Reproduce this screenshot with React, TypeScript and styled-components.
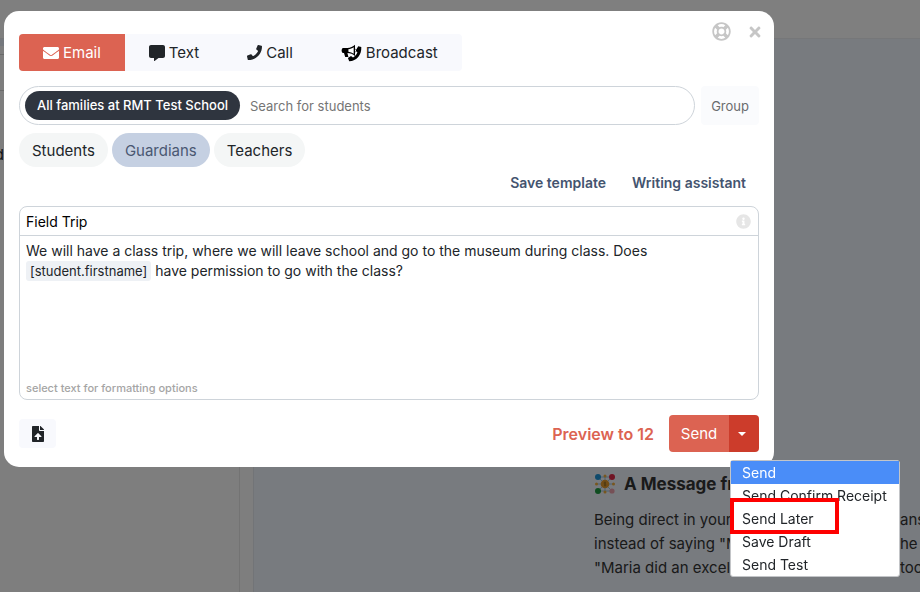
import React from "react";
import styled, { createGlobalStyle } from "styled-components";
import {
  FaCommentAlt,
  FaEnvelope,
  FaFileUpload,
  FaInfoCircle,
  FaPhone,
  FaRegLifeRing,
  FaTimes,
} from "react-icons/fa";

const GlobalStyle = createGlobalStyle`
  *, *::before, *::after { box-sizing: border-box; }
  html, body, #root { height: 100%; }
  body {
    margin: 0;
    overflow: hidden;
    background: #fff;
    color: #212529;
    font-family: Inter, "Liberation Sans", sans-serif;
    font-size: 15px;
  }
  button, input { font: inherit; color: inherit; }
  button { cursor: pointer; }
`;

const Page = styled.div`
  display: flex;
  flex-direction: column;
  height: 100%;
  overflow: hidden;
`;

const TopBar = styled.header`
  flex: none;
  height: 39px;
  border-bottom: 1px solid #eceff3;
`;

const Columns = styled.div`
  flex: 1;
  display: flex;
  min-height: 0;
`;

const Sidebar = styled.aside`
  flex: none;
  width: 240px;
  background: #fcfcfc;
  border-right: 1px solid #e6e6e6;
`;

const SidebarBand = styled.div<{ $height: number; $tint?: boolean }>`
  height: ${(p) => p.$height}px;
  background: ${(p) => (p.$tint ? "#eaf0fb" : "transparent")};
  border-bottom: ${(p) => (p.$tint ? "none" : "1px solid #d5d5d5")};
`;

const SidebarText = styled.p`
  margin: 52px 0 0;
  width: 4px;
  display: flex;
  justify-content: flex-end;
  line-height: 24px;
`;

const Gutter = styled.div`
  flex: none;
  width: 14px;
  background: #fcfcfc;
  border-right: 1px solid #e4e8ee;
`;

const Feed = styled.main`
  flex: 1;
  min-width: 0;
  display: flex;
  flex-direction: column;
  justify-content: flex-end;
  padding: 0 0 12px 340px;
  background: #f0f6ff;
  color: #343434;
`;

const PostTitle = styled.h2`
  display: flex;
  align-items: center;
  gap: 8px;
  margin: 0 0 12px;
  font-size: 17px;
  line-height: 24px;
  font-weight: 700;
  white-space: nowrap;
`;

const PostLine = styled.p`
  display: grid;
  grid-template-columns: 1fr 20px;
  margin: 0;
  line-height: 24px;
  white-space: nowrap;
`;

const Overlay = styled.div`
  position: fixed;
  inset: 0;
  padding: 11px 146px 0 4px;
  background: rgba(0, 0, 0, 0.5);
`;

const Dialog = styled.section`
  padding: 11px 15px 15px;
  background: #fff;
  border-radius: 15px;
`;

const DialogHead = styled.div`
  display: flex;
  align-items: flex-start;
  justify-content: space-between;
`;

const Tabs = styled.div`
  display: flex;
  margin-top: 12px;
  border-radius: 4px;
  overflow: hidden;
  background: #f8f9fd;
`;

const Tab = styled.button<{ $active?: boolean }>`
  display: flex;
  align-items: center;
  gap: 4px;
  height: 37px;
  padding: 0 24px;
  border: 0;
  background: ${(p) => (p.$active ? "#dc6352" : "transparent")};
  color: ${(p) => (p.$active ? "#fff" : "#212529")};
`;

const HeadActions = styled.div`
  display: flex;
  align-items: center;
  gap: 16px;
  margin-right: -4px;
`;

const IconButton = styled.button`
  display: flex;
  padding: 0;
  border: 0;
  background: none;
  color: #c6c6c6;
`;

const Recipients = styled.div`
  display: flex;
  gap: 6px;
  margin-top: 15px;
`;

const SearchField = styled.label`
  flex: 1;
  display: flex;
  align-items: center;
  gap: 10px;
  height: 39px;
  padding: 0 5px;
  border: 1px solid #ced4da;
  border-radius: 20px;
`;

const RecipientChip = styled.span`
  padding: 0 12px;
  border-radius: 15px;
  background: #2f353f;
  color: #fff;
  font-size: 13px;
  font-weight: 500;
  line-height: 29px;
  white-space: nowrap;
`;

const SearchInput = styled.input`
  flex: 1;
  min-width: 0;
  padding: 0;
  border: 0;
  outline: 0;
  background: none;
  font-size: 13px;
  &::placeholder { color: #757575; opacity: 1; }
`;

const GroupButton = styled.button`
  padding: 0 10px;
  border: 0;
  border-radius: 4px;
  background: #fafbfd;
  color: #6a6c6f;
  font-size: 13px;
`;

const Filters = styled.div`
  display: flex;
  gap: 4px;
  margin-top: 8px;
`;

const Filter = styled.button<{ $active?: boolean }>`
  height: 34px;
  padding: 0 13px;
  border: 0;
  border-radius: 17px;
  background: ${(p) => (p.$active ? "#c5d0e2" : "#f4f6f6")};
  color: ${(p) => (p.$active ? "#4a5872" : "#212529")};
`;

const Assist = styled.div`
  display: flex;
  justify-content: flex-end;
  gap: 26px;
  margin-top: 6px;
  padding-right: 13px;
`;

const AssistLink = styled.a`
  color: #44546f;
  font-size: 14px;
  font-weight: 600;
  line-height: 20px;
  text-decoration: none;
`;

const Editor = styled.div`
  margin-top: 13px;
  border: 1px solid #ced4da;
  border-radius: 8px;
`;

const Subject = styled.div`
  display: flex;
  align-items: center;
  height: 29px;
  padding: 0 7px 0 6px;
  border-bottom: 1px solid #ced4da;
  color: #e6e6e6;
`;

const SubjectInput = styled.input`
  flex: 1;
  padding: 0;
  border: 0;
  outline: 0;
  background: none;
  color: #000;
  font-size: 14px;
`;

const Message = styled.div`
  min-height: 144px;
  padding: 5px 6px 0;
  outline: 0;
  font-size: 14px;
  line-height: 20px;
`;

const Field = styled.span`
  padding: 2px 4px;
  border-radius: 3px;
  background: #eef1f5;
  font-size: 13px;
`;

const Hint = styled.p`
  margin: 0;
  padding: 0 6px 3px;
  color: #a5a5a5;
  font-size: 11px;
  font-weight: 500;
  line-height: 16px;
`;

const Footer = styled.footer`
  display: flex;
  align-items: center;
  margin-top: 15px;
`;

const UploadButton = styled.button`
  display: flex;
  align-items: center;
  justify-content: center;
  width: 37px;
  height: 29px;
  margin-right: auto;
  padding: 0;
  border: 0;
  border-radius: 4px;
  background: #f8f9fd;
`;

const PreviewButton = styled.button`
  padding: 0;
  margin-right: 15px;
  border: 0;
  background: none;
  color: #dc6352;
  font-size: 16px;
  font-weight: 600;
`;

const SplitButton = styled.div`
  position: relative;
  display: flex;
  height: 37px;
`;

const SendButton = styled.button`
  width: 60px;
  padding: 0;
  border: 0;
  border-radius: 4px 0 0 4px;
  background: #dc6352;
  color: #fff;
`;

const CaretButton = styled.button`
  display: flex;
  align-items: center;
  justify-content: center;
  width: 30px;
  padding: 0 4px 0 0;
  border: 0;
  border-radius: 0 4px 4px 0;
  background: #cc3c2b;
`;

const Caret = styled.span`
  border: 4px solid transparent;
  border-top-color: #fff;
  border-bottom: 0;
`;

const Menu = styled.div`
  position: absolute;
  top: 45px;
  left: 61px;
  width: 170px;
  border: 1px solid #c3c5c8;
  border-radius: 3px;
  background: #fff;
`;

const MenuItem = styled.button<{ $active?: boolean }>`
  position: relative;
  display: block;
  width: 100%;
  height: 23px;
  padding: 0 11px;
  border: 0;
  background: ${(p) => (p.$active ? "#4a8df8" : "transparent")};
  color: ${(p) => (p.$active ? "#fff" : "#212529")};
  font-size: 14px;
  text-align: left;
`;

const Marker = styled.span`
  position: absolute;
  top: -9px;
  left: -1px;
  width: 109px;
  height: 36px;
  border: 4px solid #fe0000;
`;

function BroadcastIcon() {
  return (
    <svg width="21" height="18" viewBox="0 0 21 18" aria-hidden="true">
      <path d="M17.2 2.2 20.3 3C20.8 10.6 15.8 17 8.2 17.3L6.9 14.1 10 12 12 13.4C14 12.3 15.6 10.5 16.4 8.2L14.8 6.4Z" fill="#000" />
      <path d="M2 4H6.4C9.3 4 12 2.8 14 .8V12.1C12 10.1 9.3 9 6.4 9L7.4 13H4.2L3 9H2C.2 8.6.2 4.4 2 4Z" fill="#000" />
      <path d="M7.4 5.3C9.4 5 11.2 4.2 12.7 3.2V9.8C11.2 8.7 9.4 8 7.4 7.7Z" fill="#fff" />
      <path d="M14.5 5.3C16 5.5 16 7.6 14.5 7.8" fill="none" stroke="#000" strokeWidth="1" />
    </svg>
  );
}

function NetworkIcon() {
  return (
    <svg width="22" height="22" viewBox="0 0 22 22" aria-hidden="true">
      <path d="M4 4 18 18M18 4 4 18M11 2V20M2 11H20M4 4H18M4 18H18" stroke="#9cc4dc" strokeWidth="1" />
      <circle cx="4" cy="4" r="3" fill="#1d94d8" />
      <circle cx="18" cy="4" r="3" fill="#e02848" />
      <circle cx="4" cy="18" r="3" fill="#1f9a40" />
      <circle cx="18" cy="18" r="2.6" fill="#eda0ac" />
      <circle cx="11" cy="11" r="4.3" fill="#e49b2d" />
      <path d="M11 8.5V13.5M9.7 10H12M10 12H12.3" stroke="#987127" strokeWidth="1" />
      <g fill="#f0ae3c">
        <circle cx="11" cy="3" r="1.5" />
        <circle cx="2.5" cy="11" r="1.5" />
        <circle cx="19.5" cy="11" r="1.5" />
        <circle cx="11" cy="19" r="1.5" />
      </g>
    </svg>
  );
}

const menuItems = ["Send", "Send Confirm Receipt", "Send Later", "Save Draft", "Send Test"];

const postLines = [
  ["Being direct in your", "ans"],
  ["instead of saying \"M", "he"],
  ["\"Maria did an excel", "too"],
];

export default function App() {
  return (
    <>
      <GlobalStyle />
      <Page>
        <TopBar />
        <Columns>
          <Sidebar>
            <SidebarBand $height={7} $tint />
            <SidebarBand $height={9} />
            <SidebarBand $height={36} />
            <SidebarText>d</SidebarText>
          </Sidebar>
          <Gutter />
          <Feed>
            <PostTitle>
              <NetworkIcon />
              A Message fr
            </PostTitle>
            {postLines.map(([start, end]) => (
              <PostLine key={end}>
                <span>{start}</span>
                <span>{end}</span>
              </PostLine>
            ))}
          </Feed>
        </Columns>
      </Page>
      <Overlay>
        <Dialog role="dialog" aria-label="New message">
          <DialogHead>
            <Tabs role="tablist">
              <Tab role="tab" aria-selected $active><FaEnvelope size={16} />Email</Tab>
              <Tab role="tab"><FaCommentAlt size={16} />Text</Tab>
              <Tab role="tab"><FaPhone size={15} />Call</Tab>
              <Tab role="tab"><BroadcastIcon />Broadcast</Tab>
            </Tabs>
            <HeadActions>
              <IconButton aria-label="Help"><FaRegLifeRing size={19} /></IconButton>
              <IconButton aria-label="Close"><FaTimes size={16} /></IconButton>
            </HeadActions>
          </DialogHead>
          <Recipients>
            <SearchField>
              <RecipientChip>All families at RMT Test School</RecipientChip>
              <SearchInput aria-label="Search for students" placeholder="Search for students" />
            </SearchField>
            <GroupButton>Group</GroupButton>
          </Recipients>
          <Filters>
            <Filter>Students</Filter>
            <Filter $active>Guardians</Filter>
            <Filter>Teachers</Filter>
          </Filters>
          <Assist>
            <AssistLink href="#template">Save template</AssistLink>
            <AssistLink href="#assistant">Writing assistant</AssistLink>
          </Assist>
          <Editor>
            <Subject>
              <SubjectInput aria-label="Subject" defaultValue="Field Trip" />
              <FaInfoCircle size={15} />
            </Subject>
            <Message role="textbox" aria-label="Message" contentEditable suppressContentEditableWarning>
              We will have a class trip, where we will leave school and go to the museum during class. Does{" "}
              <Field>[student.firstname]</Field> have permission to go with the class?
            </Message>
            <Hint>select text for formatting options</Hint>
          </Editor>
          <Footer>
            <UploadButton aria-label="Attach a file"><FaFileUpload size={16} /></UploadButton>
            <PreviewButton>Preview to 12</PreviewButton>
            <SplitButton>
              <SendButton>Send</SendButton>
              <CaretButton aria-label="More send options" aria-expanded><Caret /></CaretButton>
              <Menu role="menu">
                {menuItems.map((item, i) => (
                  <MenuItem key={item} role="menuitem" $active={i === 0}>
                    {item}
                    {item === "Send Later" && <Marker />}
                  </MenuItem>
                ))}
              </Menu>
            </SplitButton>
          </Footer>
        </Dialog>
      </Overlay>
    </>
  );
}
